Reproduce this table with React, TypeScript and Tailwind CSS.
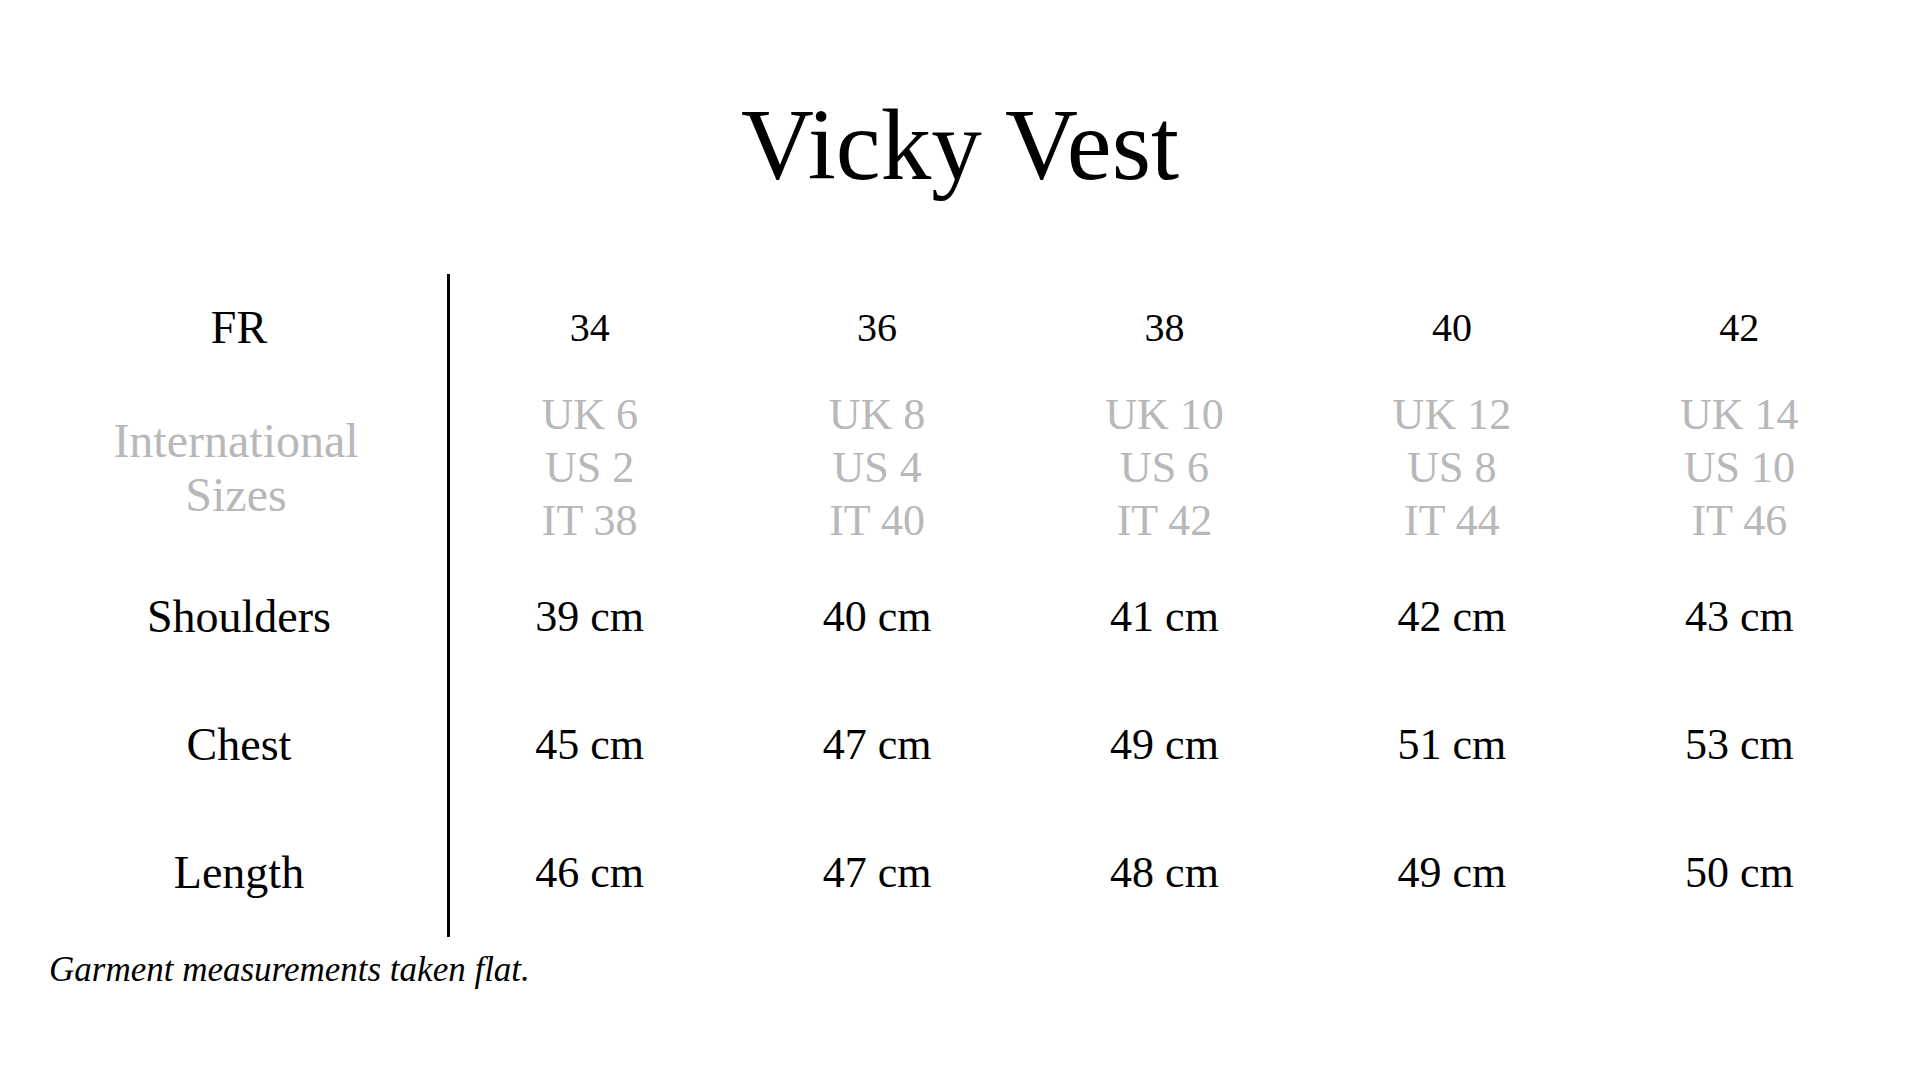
import React from "react";

const cols = [
  { fr: "34", uk: "UK 6", us: "US 2", it: "IT 38", sh: "39 cm", ch: "45 cm", le: "46 cm" },
  { fr: "36", uk: "UK 8", us: "US 4", it: "IT 40", sh: "40 cm", ch: "47 cm", le: "47 cm" },
  { fr: "38", uk: "UK 10", us: "US 6", it: "IT 42", sh: "41 cm", ch: "49 cm", le: "48 cm" },
  { fr: "40", uk: "UK 12", us: "US 8", it: "IT 44", sh: "42 cm", ch: "51 cm", le: "49 cm" },
  { fr: "42", uk: "UK 14", us: "US 10", it: "IT 46", sh: "43 cm", ch: "53 cm", le: "50 cm" },
];

function Row({ h, label, children }: { h: string; label: React.ReactNode; children: React.ReactNode }) {
  return (
    <div className={`flex ${h}`}>
      <div className="w-[419px] shrink-0 flex items-center justify-center border-r-[3px] border-black">{label}</div>
      <div className="grid grid-cols-5 w-[1437px] -ml-[4px]">{children}</div>
    </div>
  );
}

export default function App() {
  return (
    <div className="w-[1920px] h-[1080px] bg-white text-black overflow-hidden" style={{ fontFamily: "'Liberation Serif', 'Times New Roman', serif" }}>
      <div className="pt-[95px] h-[274px] text-center">
        <h1 className="text-[101px] leading-none font-normal">Vicky Vest</h1>
      </div>
      <div className="pl-[31px]">
        <Row h="h-[108px]" label={<span className="text-[46px] leading-none">FR</span>}>
          {cols.map((c) => (
            <div key={c.fr} className="flex items-center justify-center text-[40px] leading-none">{c.fr}</div>
          ))}
        </Row>
        <Row
          h="h-[171px]"
          label={
            <div className="text-[48px] leading-[54px] text-[#b8b8b8] text-center -ml-[6px]">
              International
              <br />
              Sizes
            </div>
          }
        >
          {cols.map((c) => (
            <div key={c.fr} className="flex flex-col items-center justify-center text-[44px] leading-[53px] text-[#b8b8b8]">
              <span>{c.uk}</span>
              <span>{c.us}</span>
              <span>{c.it}</span>
            </div>
          ))}
        </Row>
        <Row h="h-[128px]" label={<span className="text-[46px] leading-none">Shoulders</span>}>
          {cols.map((c) => (
            <div key={c.fr} className="flex items-center justify-center text-[44px] leading-none">{c.sh}</div>
          ))}
        </Row>
        <Row h="h-[128px]" label={<span className="text-[46px] leading-none">Chest</span>}>
          {cols.map((c) => (
            <div key={c.fr} className="flex items-center justify-center text-[44px] leading-none">{c.ch}</div>
          ))}
        </Row>
        <Row h="h-[128px]" label={<span className="text-[46px] leading-none">Length</span>}>
          {cols.map((c) => (
            <div key={c.fr} className="flex items-center justify-center text-[44px] leading-none">{c.le}</div>
          ))}
        </Row>
      </div>
      <p className="pl-[49px] mt-[15px] text-[35px] leading-none italic">Garment measurements taken flat.</p>
    </div>
  );
}
